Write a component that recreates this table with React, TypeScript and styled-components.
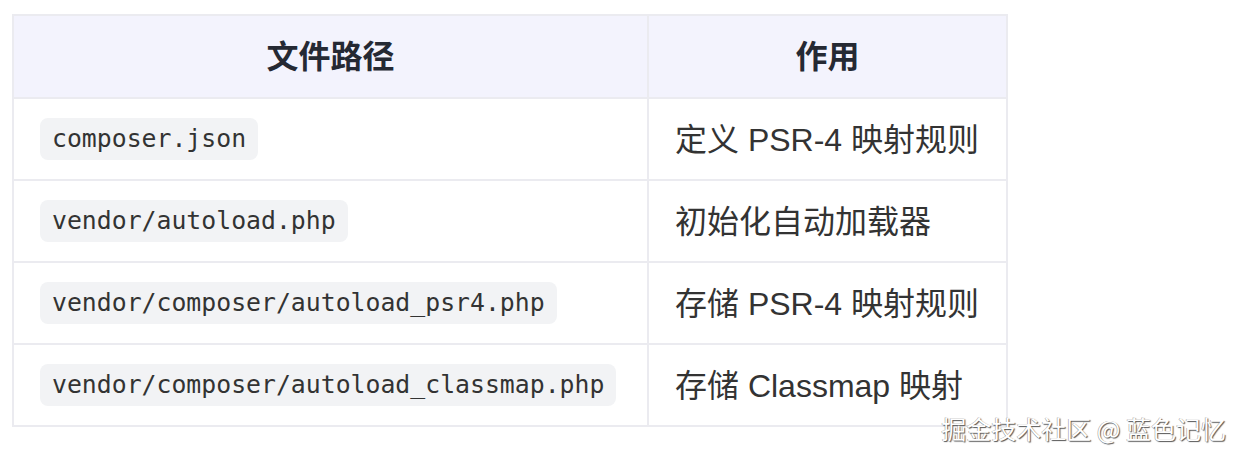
import styled, { createGlobalStyle } from "styled-components";

const GlobalStyle = createGlobalStyle`
  html, body {
    margin: 0;
    padding: 0;
    background: #fff;
  }
  body {
    font-family: "Liberation Sans", "Noto Sans CJK SC", sans-serif;
    color: #333;
  }
`;

const rows = [
  { path: "composer.json", role: "定义 PSR-4 映射规则" },
  { path: "vendor/autoload.php", role: "初始化自动加载器" },
  { path: "vendor/composer/autoload_psr4.php", role: "存储 PSR-4 映射规则" },
  { path: "vendor/composer/autoload_classmap.php", role: "存储 Classmap 映射" },
];

const Page = styled.div`
  position: relative;
  width: 1242px;
  height: 460px;
  padding: 14px 0 0 12px;
  box-sizing: border-box;
`;

const Table = styled.table`
  border-collapse: collapse;
  table-layout: fixed;
  width: 994px;
  border: 2px solid #ebebf0;
`;

const HeadCell = styled.th`
  height: 75px;
  padding: 0 27px 6px;
  background: #f3f3fd;
  border: 2px solid #ebebf0;
  font-family: "Noto Sans CJK SC", "Liberation Sans", sans-serif;
  font-size: 32px;
  line-height: 40px;
  font-weight: 700;
  color: #252933;
  text-align: center;
  vertical-align: middle;
`;

const Cell = styled.td<{ $lift?: number }>`
  height: ${(p) => 80 - (p.$lift ?? 0)}px;
  padding: 0 26px ${(p) => p.$lift ?? 0}px;
  border: 2px solid #ebebf0;
  font-size: 32px;
  color: #333;
  vertical-align: middle;
  white-space: nowrap;
`;

const Code = styled.code`
  display: inline-block;
  padding: 6px 12px;
  border-radius: 8px;
  background: #f2f3f5;
  font-family: "DejaVu Sans Mono", "Liberation Mono", monospace;
  font-size: 24.8px;
  line-height: 30px;
  color: #333;
`;

const Watermark = styled.div`
  position: absolute;
  right: 16px;
  bottom: 14px;
  font-family: "Noto Sans CJK SC", sans-serif;
  font-size: 25px;
  color: #fff;
  text-shadow: 1px 1px 1px #555, -0.5px -0.5px 0 #999;
`;

export default function App() {
  return (
    <Page>
      <GlobalStyle />
      <Table>
        <colgroup>
          <col style={{ width: 635 }} />
          <col style={{ width: 359 }} />
        </colgroup>
        <thead>
          <tr>
            <HeadCell>文件路径</HeadCell>
            <HeadCell>作用</HeadCell>
          </tr>
        </thead>
        <tbody>
          {rows.map((r) => (
            <tr key={r.path}>
              <Cell>
                <Code>{r.path}</Code>
              </Cell>
              <Cell $lift={4}>{r.role}</Cell>
            </tr>
          ))}
        </tbody>
      </Table>
      <Watermark>掘金技术社区 @ 蓝色记忆</Watermark>
    </Page>
  );
}
